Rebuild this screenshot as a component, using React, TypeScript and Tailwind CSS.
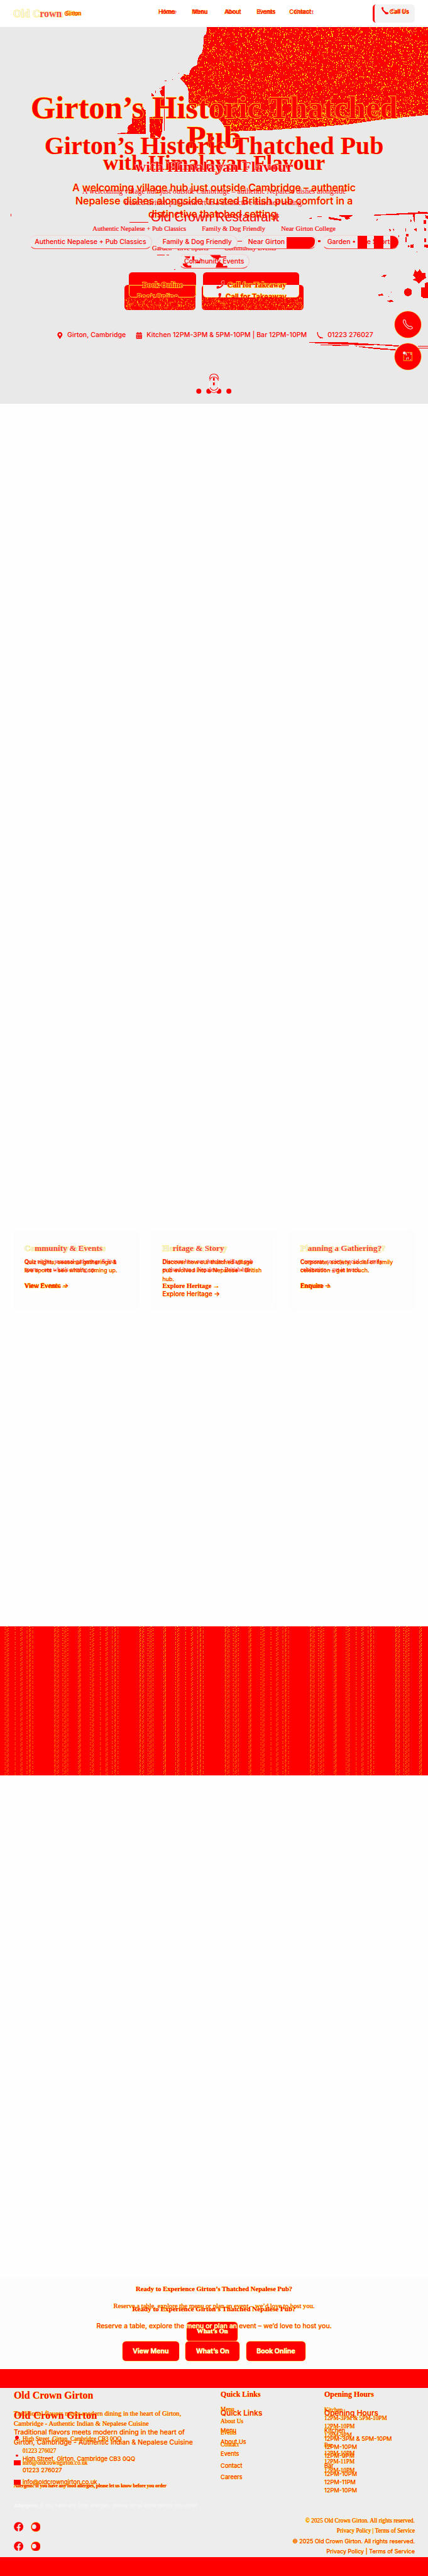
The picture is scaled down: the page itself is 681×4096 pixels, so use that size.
import React from "react";
import { FaPhoneAlt, FaMapMarkerAlt, FaCalendarAlt, FaFacebook } from "react-icons/fa";

const SERIF = "font-['Liberation_Serif',serif]";
const SANS = "font-[Inter,sans-serif]";
const INK = "text-[#ff0000] [-webkit-text-stroke:0.9px_#ffff00] [paint-order:stroke]";
const INK_LARGE = "text-[#ff0000] [-webkit-text-stroke:2px_#ffee22] [paint-order:stroke]";
const LAYER = "col-start-1 row-start-1 min-w-0";

function speckles(count: number, x0: number, y0: number, w: number, h: number, seed: number) {
  let s = seed;
  const next = () => {
    s = (s * 1664525 + 1013904223) % 4294967296;
    return s / 4294967296;
  };
  let d = "";
  for (let i = 0; i < count; i++) {
    const x = Math.round(x0 + next() * w);
    const y = Math.round(y0 + next() * h);
    const len = next() > 0.75 ? 3 : 1;
    d += `M${x} ${y}h1v${len}h-1z`;
  }
  return d;
}

const roofDots = speckles(8500, 430, 65, 594, 250, 7);
const eaveDots = speckles(1300, 540, 265, 484, 50, 21);
const towerDots = speckles(200, 300, 250, 95, 75, 5);
const bookDots = speckles(330, 0, 0, 168, 28, 11);
const callDots = speckles(520, 0, 0, 242, 28, 13);

const ROOF =
  "M495 65L493 82L488 85L486 110L484 125L478 132L473 140L472 155L462 160L455 168L452 180L440 178L431 188L438 195L446 206L450 212L451 245L462 262L475 252L495 252L505 262L512 275L521 284L528 290L540 307V332H552V315L568 314L650 311L740 305L830 298L900 288L960 281L1024 275V65Z";

function Scene() {
  return (
    <svg className="absolute inset-0 h-full w-full" viewBox="0 65 1024 900" shapeRendering="crispEdges">
      <defs>
        <clipPath id="roof">
          <path d={ROOF} />
        </clipPath>
        <clipPath id="tower">
          <path d="M341 254L344 262L349 264V321H275L304 318V308L315 296V283L335 280L338 258ZM358 280H389V312L383 331H360L357 303Z" />
        </clipPath>
      </defs>
      <g fill="#ff0000">
        <path d={ROOF} />
        <path d="M341 254L344 262L349 264V321H275L290 318L304 318L306 302L315 296V283L335 280L338 258Z" />
        <path d="M358 280H389L388 312L383 331L372 324L370 331H360L357 303Z" />
        <path d="M385 209L393 205V313H392V231H387L382 219L388 214ZM362 222L370 231H363ZM371 217h1v6h-1zM380 211l6 1v2zM393 193h5v1h-5zM412 189l2 1v2h-2zM427 175h2v2h-2zM375 240L392 233V260L375 256Z" />
        <path d="M894 514L1000 508V506L1024 508V511L980 513L894 516ZM812 514L843 514L844 516L836 520L837 524L827 525L824 519L812 518ZM786 519L808 523L816 524V528L805 527L787 524ZM758 517h11v2h-9zM740 523l5-3v4zM902 523h9v1h-7l-3 5h-1zM988 511l4 2v19l-3-5zM946 524l4 3zM982 525l3 3-3 3zM1014 527l6-1v9l-6 1zM1017 515l7 1v8l-6-2z" />
        <path d="M930 548l5 1-1 6zM940 547l4 2-3 4zM970 546h1v7h-1zM990 549l6-3v7zM1014 545l6 1v6l-5 1zM971 559h6v7h-6zM953 564l2-2v9zM990 574l-3-4zM970 568v12h3v-12zM1015 571l5-2v10l-5 1zM975 590l2-5 3 4-2 3zM981 586l9-2-1 9h-7zM1015 585h9v8l-9-2zM996 602h3v1h-3z" />
        <path d="M993 646L998 651L1004 644L1010 653H1017L1019 665L1011 670L1002 679L996 673L987 669L995 665L988 659ZM911 662L918 658H925L920 663ZM1017 677L1024 675V713H1013L1007 709L1008 687H1017ZM905 704l10-1 2 4-11 1zM928 708l2 1v2zM925 719l12-1 4 4-8 1zM932 684h4v1h-4zM935 698h2v2h-2z" />
        <circle cx="976" cy="699" r="9.5" />
        <path d="M739 819L830 819L895 823L955 826L952 829L900 825L865 826L740 820ZM697 824H760V825H697ZM766 825H812L865 829L950 836L945 838L900 835L866 831L850 828L768 826ZM1000 827h24v2h-24zM1000 832h24v1h-24z" />
        <path d="M25 514l2-3v10zM309 531h46v1h-46zM376 610h17v1h-17zM399 610h6v1h-6zM417 644h3v1h-3zM760 575h6v5h-6zM567 577h12v1h-12z" />
      </g>
      <g fill="#ffff00">
        <path clipPath="url(#roof)" d={roofDots} />
        <path clipPath="url(#roof)" d={eaveDots} />
        <path clipPath="url(#tower)" d={towerDots} />
      </g>
    </svg>
  );
}

const navItems = [
  { label: "Home", box: "ml-[179px] w-[80px]", shift: "pl-[7px]" },
  { label: "Menu", box: "w-[78px]", shift: "pl-[3px]" },
  { label: "About", box: "w-[77px]", shift: "pl-[2px]" },
  { label: "Events", box: "w-[78px]", shift: "pl-[4px]" },
  { label: "Contact", box: "w-[62px]", shift: "pl-[12px]" },
];

function Header() {
  return (
    <header className="flex h-[65px] bg-white pl-8 pr-8">
      <div className="grid w-[168px] shrink-0 pt-[17px]">
        <div className={`${LAYER} flex whitespace-nowrap leading-8`}>
          <span className={`${SERIF} w-[122px] text-[24px] font-bold tracking-[0.5px] text-[#f3f3f3] [-webkit-text-stroke:1.4px_#ffee33] [paint-order:stroke]`}>Old Crown</span>
          <span className={`${SANS} text-[14px] ${INK}`}>Girton</span>
        </div>
        <div className={`${LAYER} flex whitespace-nowrap pl-[1px] leading-8`}>
          <span className={`${SERIF} w-[125px] text-[24px] font-bold text-[#ff0000]/70`}>
            <span className="text-transparent">Old C</span>rown
          </span>
          <span className={`${SERIF} text-[14px] ${INK}`}>Girton</span>
        </div>
      </div>
      <nav className="flex grow pt-4 text-[14px] leading-6">
        {navItems.map((n) => (
          <div key={n.label} className={`grid shrink-0 ${n.box}`}>
            <span className={`${LAYER} ${SANS} font-medium ${INK}`}>{n.label}</span>
            <span className={`${LAYER} ${SERIF} ${n.shift} text-[15px] text-[#ff0000]`}>{n.label}</span>
          </div>
        ))}
      </nav>
      <div className="mt-[10px] flex h-11 w-[101px] rounded-lg border-l-[5px] border-[#ff0000] bg-[#f3f3f3] pl-3 pt-[6px]">
        <svg className="mr-[2px] mt-[1px] h-[18px] w-[22px] shrink-0" viewBox="0 0 22 18" fill="none">
          <path d="M7 2Q6 6 9 9T15 14" stroke="#ff0000" strokeWidth="3" />
          <circle cx="7" cy="3" r="2.500" fill="#ff0000" />
          <ellipse cx="17" cy="15" rx="4.500" ry="2.500" fill="#ff0000" />
        </svg>
        <div className="grid whitespace-nowrap text-[14px] leading-6">
          <span className={`${LAYER} ${SANS} font-medium ${INK}`}>Call Us</span>
          <span className={`${LAYER} ${SERIF} pl-1 text-[#ff0000]`}>Call Us</span>
        </div>
      </div>
    </header>
  );
}

const tagRows = [
  ["Authentic Nepalese + Pub Classics", "Family & Dog Friendly", "Near Girton College", "Garden • Live Sports"],
  ["Community Events"],
];
const serifTagRows = [
  ["Authentic Nepalese + Pub Classics", "Family & Dog Friendly", "Near Girton College"],
  ["Garden • Live Sports", "Community Events"],
];

function Hero() {
  return (
    <section className="relative h-[900px] overflow-hidden bg-[#e9e9e9]">
      <Scene />
      <div className="relative grid text-center whitespace-nowrap">
        <div className={`${LAYER} pt-[157px]`}>
          <h1 className={`${SERIF} ${INK_LARGE} text-[76px] font-bold leading-[72px]`}>
            Girton’s Historic Thatched
            <br />
            Pub
          </h1>
          <p className={`${SERIF} ${INK} text-[50.6px] font-bold leading-[48px]`}>with Himalayan Flavour</p>
          <div className={`${SANS} ${INK} mt-[19px] text-[24px] font-medium leading-8 tracking-[-0.1px]`}>
            <p>A welcoming village hub just outside Cambridge – authentic</p>
            <p>Nepalese dishes alongside trusted British pub comfort in a</p>
            <p>distinctive thatched setting.</p>
          </div>
          <div className={`${SANS} mt-[33px] flex flex-col gap-3 text-[16px] font-medium leading-6`}>
            {tagRows.map((row) => (
              <div key={row[0]} className="flex justify-center gap-3">
                {row.map((t) => (
                  <span key={t} className="relative h-[34px] overflow-hidden rounded-full border border-b-[#ff4444] border-l-[#f0e4e4] border-r-[#f0cccc] border-t-[#f4d4d4] bg-[#ebebeb] px-3 py-1 text-[#ff0000]">
                    {t}
                    {t === "Near Girton College" && (
                      <span className="absolute bottom-0 right-[3px] top-[3px] w-[67px] rounded-br-2xl rounded-tr-lg bg-[#ff0000]" />
                    )}
                    {t === "Garden • Live Sports" && (
                      <span className="absolute bottom-0 left-[84px] right-0 top-0 flex gap-4">
                        <span className="h-full w-6 bg-[#ff0000]" />
                        <span className="h-full w-6 bg-[#ff0000]" />
                        <span className="h-full w-5 bg-[#ff0000]" />
                      </span>
                    )}
                    {t === "Community Events" && (
                      <svg className="absolute inset-0 h-full w-full" viewBox="0 0 168 34" fill="#ff0000">
                        <path d="M5 4H22L19 10L10 8ZM26 4H32V14L27 15ZM73 1H100L102 5L116 4V7L98 8L95 14L80 7ZM45 8L53 13L50 14ZM1 24Q6 21 12 24L16 29L24 28V34H12Q4 32 1 24ZM88 34Q90 26 92 21L97 18L108 25L107 30L118 29L119 34ZM37 18H49L46 22H37Z" />
                      </svg>
                    )}
                  </span>
                ))}
              </div>
            ))}
          </div>
          <div className="ml-[297px] mt-10 flex items-end">
            <div className="flex h-[60px] w-[170px] items-end overflow-hidden rounded-lg bg-[#ff0000]">
              <svg className="h-[30px] w-full" viewBox="0 0 170 30"><path d={bookDots} fill="#ffff00" /></svg>
            </div>
            <div className="ml-[15px] flex h-[60px] w-[245px] items-end overflow-hidden rounded-lg bg-[#ff0000]">
              <svg className="h-[30px] w-full" viewBox="0 0 245 30"><path d={callDots} fill="#ffff00" /></svg>
            </div>
          </div>
          <div className={`${SANS} mt-12 flex h-6 items-center pl-[135px] text-[16px] font-medium leading-6 text-[#ff0000]`}>
            <FaMapMarkerAlt className="mr-[10px] h-4 w-4" />
            <span className="w-[138px] text-left">Girton, Cambridge</span>
            <FaCalendarAlt className="ml-[26px] mr-[10px] h-4 w-4" />
            <span className="w-[380px] text-left">Kitchen 12PM-3PM &amp; 5PM-10PM | Bar 12PM-10PM</span>
            <svg className="ml-[27px] mr-[10px] h-4 w-4" viewBox="0 0 16 16" fill="none" stroke="currentColor" strokeWidth="2">
              <path d="M2 0V4Q3 12 10 13L15 14M7 14H11" />
            </svg>
            <span>01223 276027</span>
          </div>
        </div>

        <div className={`${LAYER} pt-[254px]`}>
          <h2 className={`${SERIF} ${INK} text-[60px] font-bold leading-[60px]`}>Girton’s Historic Thatched Pub</h2>
          <p className={`${SERIF} text-[36px] font-bold leading-10 text-[#ff0000] [-webkit-text-stroke:1.4px_#ffffff] [paint-order:stroke]`}>with Himalayan Flavour</p>
          <div className={`${SERIF} mt-6 text-[18px] leading-7 text-[#ff0000]`}>
            <p>A welcoming village hub just outside Cambridge – authentic Nepalese dishes alongside</p>
            <p>trusted British pub comfort in a distinctive thatched setting.</p>
          </div>
          <div className={`${SERIF} mt-8 flex flex-col gap-3 text-[16px] leading-6`}>
            {serifTagRows.map((row) => (
              <div key={row[0]} className="flex justify-center gap-3">
                {row.map((t) => (
                  <span key={t} className="px-[13px] py-[5px] text-[#ff0000] [-webkit-text-stroke:0.3px_#ff0000]">{t}</span>
                ))}
              </div>
            ))}
          </div>
          <div className="ml-[309px] mt-10 flex">
            <div className="flex h-[60px] w-[160px] flex-col overflow-hidden rounded-lg bg-[#ff0000]">
              <div className="mt-[30px] h-[30px] rounded-b-lg border border-[#ffee33]" />
            </div>
            <div className="ml-4 flex h-[60px] w-[231px] flex-col overflow-hidden rounded-lg bg-[#ff0000]">
              <div className="mt-[30px] h-[30px] rounded-b-lg border border-t-0 border-[#ffee88] bg-[#eeeeee]" />
            </div>
          </div>
        </div>

        <div className={`${LAYER} pt-[435px] text-center font-['Liberation_Sans',sans-serif] text-[31px] leading-10 text-[#ff0000]`}>
          <span className="pl-1">Old Crown Restaurant</span>
        </div>

        <div className={`${LAYER} h-[647px] overflow-hidden pt-[602px] text-left text-[18px] font-bold leading-7`}>
          <div className={`${SERIF} flex h-7 pl-[341px]`}>
            <span className={`${INK_LARGE} w-[177px]`}>Book Online</span>
            <FaPhoneAlt className="mt-1 h-5 w-5 -scale-x-100 text-[#ff0000] [stroke:#eeeeee] [stroke-width:30px]" />
            <span className={`${INK_LARGE} pl-[6px]`}>Call for Takeaway</span>
          </div>
          <div className={`${SANS} mt-[2px] flex h-7 pl-[328px] text-[17px] font-semibold`}>
            <span className={`${INK_LARGE} w-[184px]`}>Book Online</span>
            <FaPhoneAlt className="mt-1 h-[18px] w-[18px] -scale-x-100 text-[#ff0000]" />
            <span className={`${INK_LARGE} pl-[10px]`}>Call for Takeaway</span>
          </div>
        </div>
      </div>

      <div className="absolute right-[17px] top-[680px] flex flex-col gap-[13px]">
        <div className="flex h-[63px] w-[63px] items-center justify-center rounded-full bg-[#ff0000] ring-1 ring-[#ffcc44]">
          <svg className="h-6 w-6" viewBox="0 0 24 24" fill="none" stroke="#eeeeee" strokeWidth="1.6">
            <path d="M2 1C5 0 7 3 7 6C6 10 12 16 16 17C20 15 23 18 23 21C19 25 12 22 7 16C3 12 -1 5 2 1Z" />
          </svg>
        </div>
        <div className="flex h-[63px] w-[63px] items-center justify-center rounded-full bg-[#ff0000] ring-1 ring-[#ffcc44]">
          <svg className="h-6 w-6" viewBox="0 0 24 24" fill="none">
            <path d="M2 8V22H22V2H8" stroke="#ffff00" />
            <circle cx="3.500" cy="3.500" r="3.500" fill="#eeeeee" />
            <path d="M8 3v6M12 3h2M17 4h4M18 7h3M10 14l-2 6M13 13v6M17 20l3-2M7 8h3" stroke="#eeeeee" strokeWidth="1.500" />
          </svg>
        </div>
      </div>
      <svg className="absolute left-[468px] top-[825px] h-[62px] w-[88px]" viewBox="0 0 88 62" fill="none">
        <g fill="#ff0000">
          <circle cx="8" cy="45" r="6" />
          <circle cx="32" cy="45" r="6" />
          <circle cx="56" cy="45" r="6" />
          <circle cx="80" cy="45" r="6" />
        </g>
        <rect x="33.500" y="10" width="22" height="37" rx="11" fill="#e9e9e9" stroke="#f6f6f6" strokeWidth="2" />
        <path d="M33.500 16Q34 4 44 4T55.500 16M34 20Q36 11 44 11T55 20M35 36Q38 43 44 43T54 36M38 46Q44 51 50 46" stroke="#ff0000" strokeWidth="1.600" />
        <path d="M44 13V31" stroke="#ff0000" strokeWidth="4" />
        <circle cx="44" cy="22" r="2.500" fill="#f3f3f3" />
      </svg>
    </section>
  );
}

const cards = [
  {
    title: "Community & Events",
    sans: ["Quiz nights, seasonal gatherings &", "live sports – see what’s coming up."],
    serif: ["Quiz nights, seasonal gatherings & live", "sports – see what’s coming up."],
    link: "View Events →",
  },
  {
    title: "Heritage & Story",
    sans: ["Discover how our thatched village", "pub evolved into a Nepalese + British", "hub."],
    serif: ["Discover how our thatched village pub", "evolved into a Nepalese + British hub."],
    link: "Explore Heritage →",
  },
  {
    title: "Planning a Gathering?",
    sans: ["Corporate, society, social or family", "celebration – get in touch."],
    serif: ["Corporate, society, social or family", "celebration – get in touch."],
    link: "Enquire →",
  },
];

function Cards() {
  return (
    <section className="mt-[1980px] grid grid-cols-3 gap-8 px-[33px]">
      {cards.map((c) => (
        <article key={c.title} className="grid h-[186px] content-start rounded-lg border border-[#fbfbfb] bg-[#fdfdfd] px-6 pt-[25px] whitespace-nowrap">
          <div className={LAYER}>
            <h3 className={`${SERIF} text-[20px] font-bold leading-7 tracking-[0.45px] text-[#ececec] [-webkit-text-stroke:1.3px_#ffee33] [paint-order:stroke]`}>{c.title}</h3>
            <div className={`${SANS} ${INK} mt-2 text-[13.5px] leading-5`}>
              {c.sans.map((l) => <p key={l}>{l}</p>)}
            </div>
            <p className={`${SANS} ${INK} mt-4 text-[15px] font-medium leading-6`}>{c.link}</p>
          </div>
          <div className={LAYER}>
            <h3 className={`${SERIF} text-[20px] font-bold leading-7 text-[#ff0000]/75`}>
              <span className="text-transparent">{c.title.slice(0, 2)}</span>
              {c.title.slice(2)}
            </h3>
            <div className={`${SERIF} mt-2 text-[14px] leading-5 text-[#ff0000]`}>
              {c.serif.map((l) => <p key={l}>{l}</p>)}
            </div>
            <p className={`${SERIF} ${INK} mt-4 text-[16px] font-bold leading-6`}>{c.link}</p>
          </div>
        </article>
      ))}
    </section>
  );
}

const bandColumns = [0, 2, 4, 6, 9, 20, 22, 24, 27, 32, 37, 57, 60, 62, 86, 88, 90, 93, 110, 118, 121, 123, 126, 138, 144, 146, 148, 152, 175];

function Band() {
  return (
    <svg className="mt-[758px] block h-[356px] w-full bg-[#ff0000]" shapeRendering="crispEdges">
      <defs>
        <pattern id="threads" width="204" height="12" x="130" patternUnits="userSpaceOnUse">
          {bandColumns.map((x, i) => (
            <path key={x} d={`M${x} ${i % 4}h1v1h-1zM${x} ${(i % 4) + 4}h1v1h-1zM${x} ${(i % 4) + 8}h1v1h-1z`} fill="#ffff00" />
          ))}
        </pattern>
      </defs>
      <rect width="100%" height="356" fill="url(#threads)" />
    </svg>
  );
}

const ctaBtn = "flex items-center justify-center rounded-lg bg-[#ff0000] text-[16px] text-white ring-1 ring-[#ffee66] [-webkit-text-stroke:1px_#ffff00] [paint-order:stroke]";

function Cta() {
  const q = "Ready to Experience Girton’s Thatched Nepalese Pub?";
  return (
    <section className="mt-[1201px] grid h-[218px] content-start whitespace-nowrap bg-[#fcfcfc] text-center">
      <div className={`${LAYER} ${SERIF} pt-[16px] text-[16px] leading-6`}>
        <h2 className={`${INK} font-bold`}>{q}</h2>
        <p className={`${INK} mt-4`}>Reserve a table, explore the menu or plan an event – we’d love to host you.</p>
        <div className={`${ctaBtn} ml-[447px] mt-[26px] h-[46px] w-[122px] font-bold`}>What’s On</div>
      </div>
      <div className={`${LAYER} pt-[64px] leading-6`}>
        <h2 className={`${SERIF} ${INK} text-[16.7px] font-bold`}>{q}</h2>
        <p className={`${SANS} ${INK} mt-4 text-[16px]`}>
          Reserve a table, explore the <span className="text-white">menu or plan an</span> event – we’d love to host you.
        </p>
        <div className={`${SANS} mt-6 flex justify-center gap-4 font-semibold`}>
          <div className={`${ctaBtn} h-12 w-[135px]`}>View Menu</div>
          <div className={`${ctaBtn} h-12 w-[129px]`}>What’s On</div>
          <div className={`${ctaBtn} h-12 w-[142px]`}>Book Online</div>
        </div>
      </div>
    </section>
  );
}

const contacts = ["High Street, Girton, Cambridge CB3 0QQ", "01223 276027", "info@oldcrowngirton.co.uk"];

function Contacts({ pin }: { pin: string }) {
  return (
    <ul className="mt-4 flex flex-col gap-2 text-[14px] leading-5">
      {contacts.map((c, i) => (
        <li key={c} className="flex items-center">
          <span className="mr-[5px] flex h-5 w-4 items-center justify-center">
            {i === 0 && <span className={`rounded-full bg-[#ff0000] ${pin}`} />}
            {i === 2 && <span className="h-3 w-4 bg-[#ff0000]" />}
          </span>
          {c}
        </li>
      ))}
    </ul>
  );
}

function Hours() {
  return (
    <div className="text-[14px] leading-5">
      <p>Kitchen</p>
      <p>12PM-3PM &amp; 5PM-10PM</p>
      <p>12PM-10PM</p>
      <p>12PM-9PM</p>
      <p className="mt-1">Bar</p>
      <p>12PM-10PM</p>
      <p>12PM-11PM</p>
      <p>12PM-10PM</p>
    </div>
  );
}

function Social() {
  return (
    <div className="flex items-center gap-[17px] text-[#ff0000]">
      <FaFacebook className="h-[23px] w-[23px]" />
      <svg className="h-[24px] w-[24px]" viewBox="0 0 24 24">
        <circle cx="12" cy="12" r="11.500" fill="#ff0000" stroke="#ffee33" />
        <path d="M3 10Q3 6 6 6H10Q13 7 13 11Q13 16 9 17H6Q3 16 3 13Z" fill="#ededed" />
      </svg>
    </div>
  );
}

function Footer() {
  return (
    <footer className="h-[496px] border-y-[46px] border-[#ff0000] bg-[#ededed] pl-[33px] pr-8 whitespace-nowrap">
      <div className={`grid h-[307px] grid-cols-[495px_248px_1fr] ${INK}`}>
        <div className="grid content-start">
          <div className={`${LAYER} ${SERIF} pt-[2px]`}>
            <h4 className="text-[24px] font-bold leading-8">Old Crown Girton</h4>
            <p className="mt-4 text-[16px] leading-6">
              Traditional flavors meets modern dining in the heart of Girton,
              <br />
              Cambridge - Authentic Indian &amp; Nepalese Cuisine
            </p>
            <Contacts pin="-mt-2 h-[9px] w-[9px]" />
            <p className="mt-[38px] text-[12px] font-bold leading-4 tracking-[-0.35px]">Allergens: If you have any food allergies, please let us know before you order</p>
          </div>
          <div className={`${LAYER} ${SANS} pt-[50px]`}>
            <h4 className={`${SERIF} text-[24px] font-bold leading-8 tracking-[0.6px]`}>Old Crown Girton</h4>
            <p className="mt-[14px] text-[16px] leading-6">
              Traditional flavors meets modern dining in the heart of
              <br />
              Girton, Cambridge - Authentic Indian &amp; Nepalese Cuisine
            </p>
            <Contacts pin="-mt-4 h-[4px] w-[6px]" />
            <p className="mt-[38px] text-[12px] leading-4 text-[#f7f7f7] [-webkit-text-stroke:0px]">
              <b>Allergens:</b> If you have any food allergies, please let us know before you order
            </p>
          </div>
        </div>
        <div className="grid content-start">
          <div className={`${LAYER} ${SERIF} pt-[2px]`}>
            <h5 className="text-[18px] font-bold leading-7">Quick Links</h5>
            <ul className="mt-[13px] flex flex-col gap-2 text-[14px] leading-5">
              <li>Menu</li><li>About Us</li><li>Events</li><li>Contact</li>
            </ul>
          </div>
          <div className={`${LAYER} ${SANS} pt-[48px]`}>
            <h5 className="text-[18px] font-medium leading-7">Quick Links</h5>
            <ul className="mt-4 flex flex-col gap-2 text-[14px] leading-5">
              <li>Menu</li><li>About Us</li><li>Events</li><li>Contact</li><li>Careers</li>
            </ul>
          </div>
        </div>
        <div className="grid content-start">
          <div className={`${LAYER} ${SERIF} pt-[2px]`}>
            <h5 className="mb-[14px] text-[18px] font-bold leading-7">Opening Hours</h5>
            <Hours />
          </div>
          <div className={`${LAYER} ${SANS} pt-[48px]`}>
            <h5 className="mb-4 text-[18px] font-medium leading-7">Opening Hours</h5>
            <Hours />
          </div>
        </div>
      </div>
      <div className="flex justify-between text-[14px] leading-6">
        <div className="flex flex-col gap-[22px] pt-[14px]">
          <Social />
          <Social />
        </div>
        <div className={`text-right ${INK}`}>
          <div className={SERIF}>
            <p>© 2025 Old Crown Girton. All rights reserved.</p>
            <p>Privacy Policy | Terms of Service</p>
          </div>
          <div className={`${SANS} text-[13.6px]`}>
            <p>© 2025 Old Crown Girton. All rights reserved.</p>
            <p>Privacy Policy | Terms of Service</p>
          </div>
        </div>
      </div>
    </footer>
  );
}

export default function App() {
  return (
    <div className="w-full overflow-hidden bg-[#fefefe]">
      <div className="w-[1024.5px] [zoom:0.665]">
        <Header />
        <Hero />
        <Cards />
        <Band />
        <Cta />
        <Footer />
      </div>
    </div>
  );
}
